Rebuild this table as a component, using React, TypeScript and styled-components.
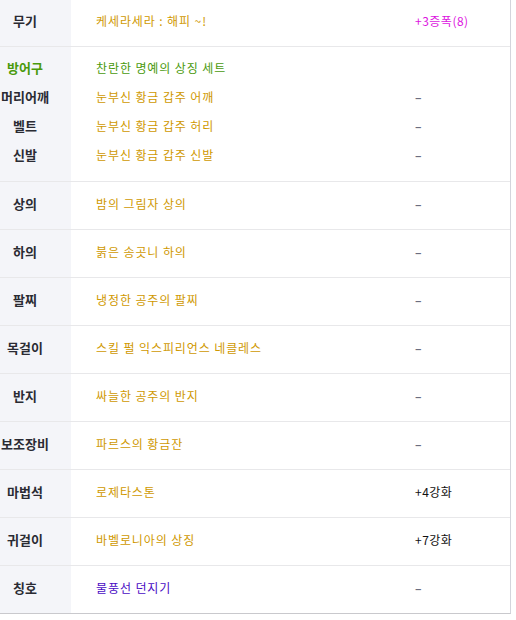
import React from "react";
import styled, { createGlobalStyle } from "styled-components";

const Global = createGlobalStyle`
  html, body { margin: 0; padding: 0; background: #ffffff; }
  body { font-family: "Noto Sans CJK KR", "Noto Sans", sans-serif; }
`;

const Table = styled.div`
  width: 510px;
  border-right: 1px solid #d4d5dc;
  border-bottom: 1px solid #c9c9cd;
  display: flex;
  flex-direction: column;
`;

const Row = styled.div<{ $h: number; $last?: boolean }>`
  display: grid;
  grid-template-columns: 71px 1fr;
  height: ${(p) => p.$h}px;
  border-bottom: ${(p) => (p.$last ? "none" : "1px solid #e8e8ea")};
`;

const LabelCell = styled.div`
  background: #f4f5f9;
  display: flex;
  align-items: center;
  justify-content: center;
  padding: 0 21px 5px 0;
`;

const Label = styled.div<{ $color?: string }>`
  font-size: 13px;
  font-weight: 700;
  color: ${(p) => p.$color || "#2a2b33"};
  white-space: nowrap;
  text-align: center;
  line-height: 29px;
`;

const ValueCell = styled.div`
  display: grid;
  grid-template-columns: 319px 1fr;
  align-items: center;
  padding: 0 0 5px 25px;
`;

const Value = styled.div<{ $color: string }>`
  font-size: 12px;
  letter-spacing: 0.9px;
  color: ${(p) => p.$color};
  white-space: nowrap;
  line-height: 29px;
`;

const Extra = styled.div<{ $color: string; $dash?: boolean }>`
  font-size: 12px;
  letter-spacing: 0.5px;
  color: ${(p) => p.$color};
  font-weight: ${(p) => (p.$dash ? 700 : 400)};
  white-space: nowrap;
  line-height: 29px;
`;

const GroupRow = styled.div`
  display: grid;
  grid-template-columns: 71px 1fr;
  border-bottom: 1px solid #e8e8ea;
`;

const LabelStack = styled.div`
  background: #f4f5f9;
  display: flex;
  flex-direction: column;
  padding: 6px 21px 12px 0;
  align-items: center;
`;

const ValueStack = styled.div`
  display: flex;
  flex-direction: column;
  padding: 6px 0 12px 25px;
`;

const SubLine = styled.div`
  display: grid;
  grid-template-columns: 319px 1fr;
  height: 29px;
  align-items: center;
`;

const GOLD = "#cf9800";
const GREEN = "#4a9a0c";
const MAGENTA = "#dc14e0";
const PURPLE = "#4a0cc4";
const BLACK = "#111111";
const DASH = "#6c6d80";

type Item = { label: string; value: string; color: string; extra: string; extraColor: string };

const rows: Item[] = [
  { label: "상의", value: "밤의 그림자 상의", color: GOLD, extra: "–", extraColor: DASH },
  { label: "하의", value: "붉은 송곳니 하의", color: GOLD, extra: "–", extraColor: DASH },
  { label: "팔찌", value: "냉정한 공주의 팔찌", color: GOLD, extra: "–", extraColor: DASH },
  { label: "목걸이", value: "스킬 펄 익스피리언스 네클레스", color: GOLD, extra: "–", extraColor: DASH },
  { label: "반지", value: "싸늘한 공주의 반지", color: GOLD, extra: "–", extraColor: DASH },
  { label: "보조장비", value: "파르스의 황금잔", color: GOLD, extra: "–", extraColor: DASH },
  { label: "마법석", value: "로제타스톤", color: GOLD, extra: "+4강화", extraColor: BLACK },
  { label: "귀걸이", value: "바벨로니아의 상징", color: GOLD, extra: "+7강화", extraColor: BLACK },
  { label: "칭호", value: "물풍선 던지기", color: PURPLE, extra: "–", extraColor: DASH },
];

const armor = [
  { label: "방어구", labelColor: GREEN, value: "찬란한 명예의 상징 세트", color: GREEN, extra: "" },
  { label: "머리어깨", value: "눈부신 황금 갑주 어깨", color: GOLD, extra: "–" },
  { label: "벨트", value: "눈부신 황금 갑주 허리", color: GOLD, extra: "–" },
  { label: "신발", value: "눈부신 황금 갑주 신발", color: GOLD, extra: "–" },
];

export default function App() {
  return (
    <>
      <Global />
      <Table>
        <Row $h={46}>
          <LabelCell>
            <Label>무기</Label>
          </LabelCell>
          <ValueCell>
            <Value $color={GOLD}>케세라세라 : 해피 ~!</Value>
            <Extra $color={MAGENTA}>+3증폭(8)</Extra>
          </ValueCell>
        </Row>
        <GroupRow>
          <LabelStack>
            {armor.map((a) => (
              <Label key={a.label} $color={a.labelColor}>
                {a.label}
              </Label>
            ))}
          </LabelStack>
          <ValueStack>
            {armor.map((a) => (
              <SubLine key={a.label}>
                <Value $color={a.color}>{a.value}</Value>
                <Extra $color={DASH} $dash>{a.extra}</Extra>
              </SubLine>
            ))}
          </ValueStack>
        </GroupRow>
        {rows.map((r, i) => (
          <Row key={r.label} $h={47} $last={i === rows.length - 1}>
            <LabelCell>
              <Label>{r.label}</Label>
            </LabelCell>
            <ValueCell>
              <Value $color={r.color}>{r.value}</Value>
              <Extra $color={r.extraColor} $dash={r.extra === "–"}>{r.extra}</Extra>
            </ValueCell>
          </Row>
        ))}
      </Table>
    </>
  );
}
